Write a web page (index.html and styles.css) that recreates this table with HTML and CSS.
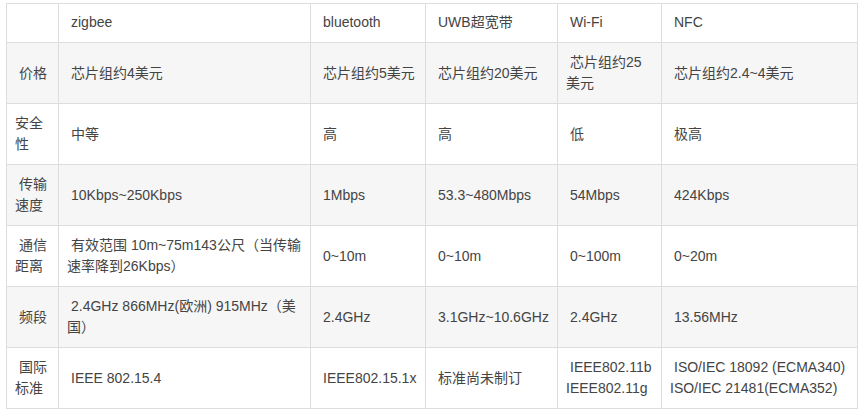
FILE: index.html
```html
<!DOCTYPE html>
<html lang="zh-CN">
<head>
<meta charset="utf-8">
<title>无线技术对比</title>
<link rel="stylesheet" href="styles.css">
</head>
<body>
<table class="cmp">
  <colgroup>
    <col class="c0"><col class="c1"><col class="c2"><col class="c3"><col class="c4"><col class="c5">
  </colgroup>
  <tbody>
    <tr class="head">
      <td></td><td>zigbee</td><td>bluetooth</td><td>UWB超宽带</td><td>Wi-Fi</td><td>NFC</td>
    </tr>
    <tr class="alt">
      <td>价格</td><td>芯片组约4美元</td><td>芯片组约5美元</td><td>芯片组约20美元</td><td>芯片组约25<br>美元</td><td>芯片组约2.4~4美元</td>
    </tr>
    <tr>
      <td class="noindent">安全<br>性</td><td>中等</td><td>高</td><td>高</td><td>低</td><td>极高</td>
    </tr>
    <tr class="alt">
      <td>传输<br>速度</td><td>10Kbps~250Kbps</td><td>1Mbps</td><td>53.3~480Mbps</td><td>54Mbps</td><td>424Kbps</td>
    </tr>
    <tr>
      <td>通信<br>距离</td><td>有效范围 10m~75m143公尺（当传输<br>速率降到26Kbps）</td><td>0~10m</td><td>0~10m</td><td>0~100m</td><td>0~20m</td>
    </tr>
    <tr class="alt">
      <td>频段</td><td>2.4GHz 866MHz(欧洲) 915MHz（美<br>国）</td><td>2.4GHz</td><td>3.1GHz~10.6GHz</td><td>2.4GHz</td><td>13.56MHz</td>
    </tr>
    <tr>
      <td>国际<br>标准</td><td>IEEE 802.15.4</td><td>IEEE802.15.1x</td><td>标准尚未制订</td><td>IEEE802.11b<br>IEEE802.11g</td><td>ISO/IEC 18092 (ECMA340)<br>ISO/IEC 21481(ECMA352)</td>
    </tr>
  </tbody>
</table>
</body>
</html>
```

FILE: styles.css
```css
html, body {
  margin: 0;
  background: #fff;
}
body {
  padding: 3px 0 0 6px;
  font-family: "Liberation Sans", Arial, "Noto Sans CJK SC", sans-serif;
  font-size: 14px;
  color: #444;
}
.cmp {
  border-collapse: collapse;
  table-layout: fixed;
  width: 852px;
}
.c0 { width: 52px; }
.c1 { width: 252px; }
.c2 { width: 115px; }
.c3 { width: 132px; }
.c4 { width: 104px; }
.c5 { width: 196px; }
.cmp td {
  border: 1px solid #ddd;
  padding: 9px 8px;
  line-height: 21px;
  text-indent: 4px;
  vertical-align: middle;
  white-space: nowrap;
  overflow: hidden;
}
.cmp tr.head td {
  padding-top: 8px;
  padding-bottom: 9px;
}
.cmp td.noindent {
  text-indent: 0;
}
.cmp tr.alt td {
  background: #f6f6f6;
}
```
